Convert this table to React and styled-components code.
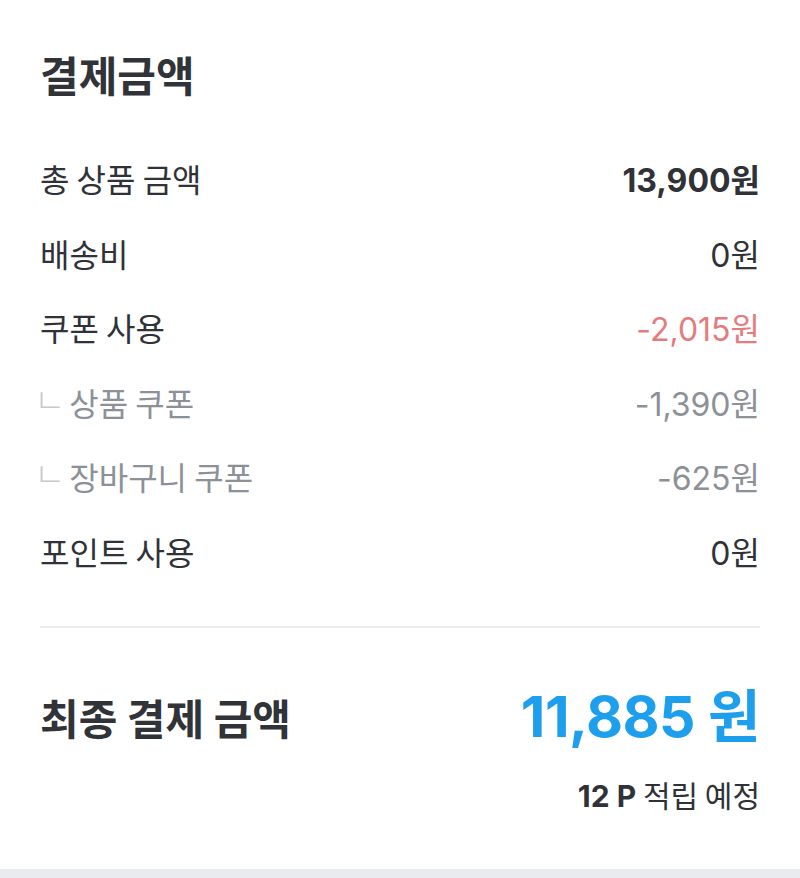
import React from "react";
import styled, { createGlobalStyle } from "styled-components";

const GlobalStyle = createGlobalStyle`
  body {
    margin: 0;
    background: #ffffff;
    font-family: "Noto Sans CJK KR", "Noto Sans", sans-serif;
    color: #2f3237;
  }
`;

const numFont = `"Inter", "Noto Sans CJK KR", sans-serif`;

const Page = styled.div`
  width: 800px;
  min-height: 878px;
  background: #ffffff;
  display: flex;
  flex-direction: column;
`;

const Section = styled.section`
  padding: 47px 40px 56px;
`;

const Title = styled.h2`
  margin: 0;
  font-size: 42px;
  line-height: 54px;
  font-weight: 700;
  color: #303338;
`;

const List = styled.ul`
  list-style: none;
  margin: 40px 0 0;
  padding: 0;
`;

const Row = styled.li`
  display: flex;
  align-items: center;
  justify-content: space-between;
  height: 74.5px;
  font-size: 32px;
  color: ${(p) => (p.$sub ? "#8b9197" : "#2f3237")};
`;

const Label = styled.span`
  display: flex;
  align-items: center;
`;

const Branch = styled.span`
  font-size: 34px;
  line-height: 1;
  font-weight: 300;
  color: #c6cacf;
  margin: 0 4px 0 -6px;
  transform: translateY(-3px);
`;

const Value = styled.span`
  font-family: ${numFont};
  font-weight: ${(p) => (p.$bold ? 700 : 400)};
  color: ${(p) => p.$color || "inherit"};
`;

const Divider = styled.hr`
  margin: 38px 0 0;
  border: none;
  height: 2px;
  background: #ececec;
`;

const TotalRow = styled.div`
  display: flex;
  align-items: center;
  justify-content: space-between;
  margin-top: 56px;
`;

const TotalLabel = styled.span`
  font-size: 42px;
  font-weight: 700;
  color: #303338;
`;

const TotalValue = styled.span`
  font-family: ${numFont};
  font-size: 57px;
  line-height: 65px;
  font-weight: 700;
  color: #1d9fee;
  letter-spacing: -0.5px;
`;

const Points = styled.div`
  margin-top: 28px;
  text-align: right;
  font-size: 30px;
  line-height: 34px;
  color: #2f3237;
`;

const PointsStrong = styled.b`
  font-family: ${numFont};
  font-weight: 700;
`;

const BottomBar = styled.div`
  flex: 1;
  background: #e9ebee;
`;

const rows = [
  { label: "총 상품 금액", value: "13,900원", bold: true },
  { label: "배송비", value: "0원" },
  { label: "쿠폰 사용", value: "-2,015원", color: "#e57b7c" },
  { label: "상품 쿠폰", value: "-1,390원", sub: true },
  { label: "장바구니 쿠폰", value: "-625원", sub: true },
  { label: "포인트 사용", value: "0원" },
];

export default function App() {
  return (
    <Page>
      <GlobalStyle />
      <Section>
        <Title>결제금액</Title>
        <List>
          {rows.map((row) => (
            <Row key={row.label} $sub={row.sub}>
              <Label>
                {row.sub && <Branch>ㄴ</Branch>}
                {row.label}
              </Label>
              <Value $bold={row.bold} $color={row.color}>
                {row.value}
              </Value>
            </Row>
          ))}
        </List>
        <Divider />
        <TotalRow>
          <TotalLabel>최종 결제 금액</TotalLabel>
          <TotalValue>11,885 원</TotalValue>
        </TotalRow>
        <Points>
          <PointsStrong>12 P</PointsStrong> 적립 예정
        </Points>
      </Section>
      <BottomBar />
    </Page>
  );
}
